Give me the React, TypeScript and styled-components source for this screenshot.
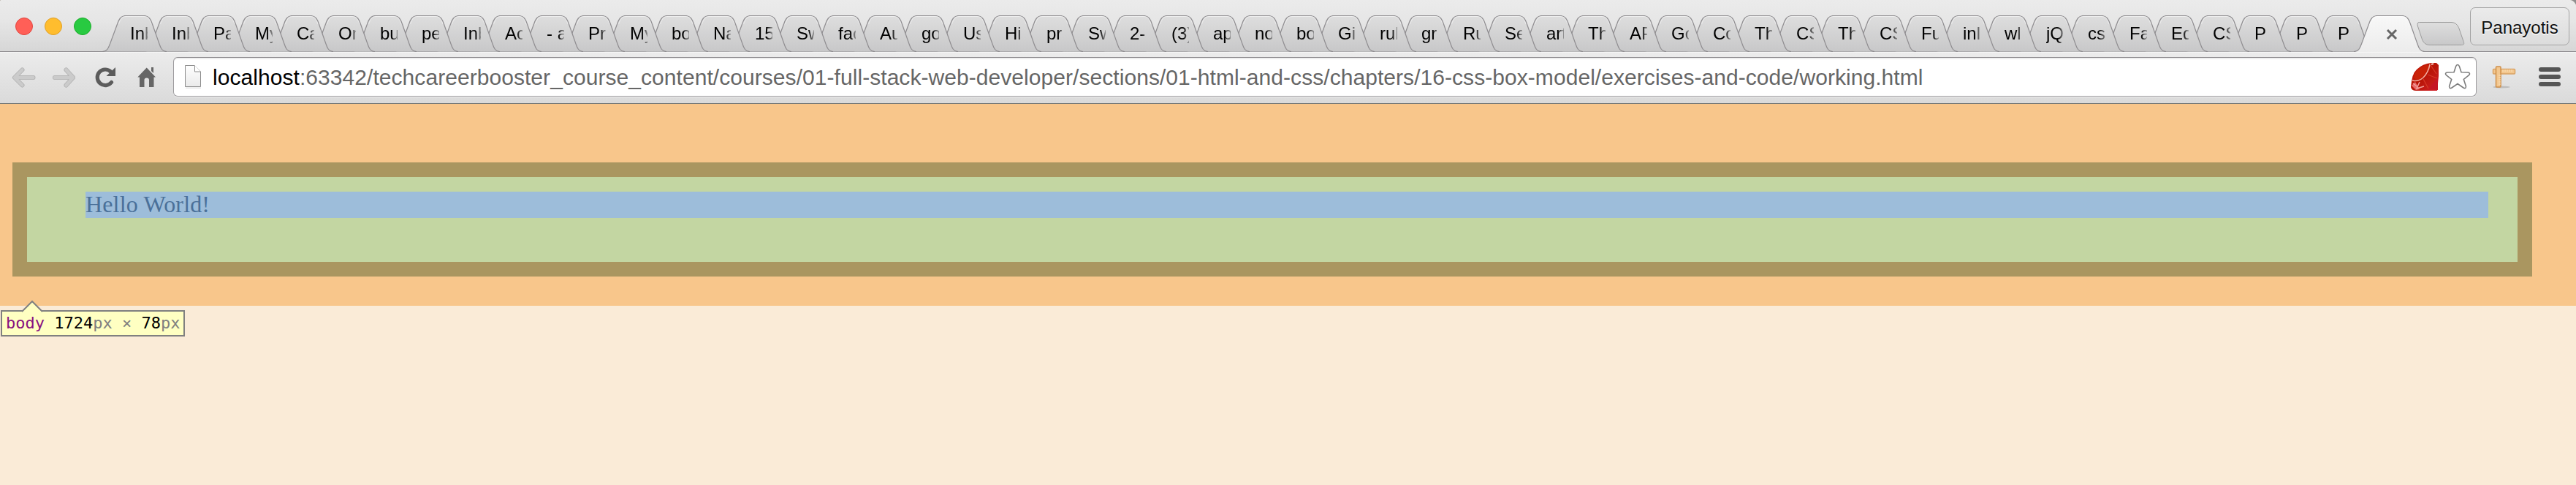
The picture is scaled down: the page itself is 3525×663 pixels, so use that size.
import React from "react";
import styled, { createGlobalStyle } from "styled-components";

const GlobalStyle = createGlobalStyle`
  html { background: #8f8f8f; }
  body { margin: 0; font-family: "Liberation Sans", Arial, sans-serif; }
  * { box-sizing: border-box; }
  svg { display: block; flex: none; }
`;

const Window = styled.div`
  width: 3525px;
  height: 663px;
  display: flex;
  flex-direction: column;
  overflow: hidden;
  border-radius: 2px 9px 0 0;
  background: #faebd7;
`;

const TabStrip = styled.header`
  flex: none;
  height: 71px;
  display: flex;
  background: linear-gradient(#ebebeb, #e6e6e6 40%, #d6d6d6);
  box-shadow: inset 0 -1px #8f8d90;
`;

const TrafficLights = styled.div`
  display: flex;
  gap: 16px;
  padding: 24px 0 0 21px;
  width: 140px;
  flex: none;
`;

const Light = styled.span<{ $fill: string; $edge: string }>`
  width: 24px;
  height: 24px;
  border-radius: 50%;
  background: ${(p) => p.$fill};
  border: 1px solid ${(p) => p.$edge};
`;

const Tabs = styled.div`
  display: flex;
  flex: none;
  padding-top: 21px;
  isolation: isolate;
`;

const TabBox = styled.div<{ $order: number; $active?: boolean }>`
  display: grid;
  flex: none;
  width: ${(p) => (p.$active ? 97 : 88)}px;
  height: 50px;
  margin-right: -31px;
  margin-left: ${(p) => (p.$active ? 3 : 0)}px;
  z-index: ${(p) => p.$order};
  & > * { grid-area: 1 / 1; }
`;

const TabLabel = styled.span`
  margin: 11px 0 0 38px;
  width: 24px;
  height: 32px;
  overflow: hidden;
  white-space: pre;
  font-size: 24px;
  line-height: 27px;
  color: #000;
  mask-image: linear-gradient(90deg, #000 16px, rgba(0, 0, 0, 0.3) 24px);
`;

const CloseIcon = styled.svg`
  margin: 18px 0 0 44px;
`;

const NewTab = styled.svg`
  margin: 29px 0 0 20px;
`;

const ProfileButton = styled.button`
  margin: 10px 9px 0 auto;
  width: 136px;
  height: 52px;
  padding: 3px 0 0;
  border: 1px solid #a3a3a3;
  border-radius: 7px;
  background: linear-gradient(#ebebeb, #dcdcdc);
  font: 24px "Liberation Sans", Arial, sans-serif;
  color: #111;
  text-shadow: 0 2px #f4f4f4;
`;

const Toolbar = styled.nav`
  flex: none;
  height: 71px;
  display: flex;
  align-items: center;
  gap: 21px;
  padding: 0 19px 0 16px;
  background: linear-gradient(#ececec, #dadada);
  border-bottom: 1px solid #777a78;
  box-shadow: inset 0 1px #f6f6f6;
`;

const AddressBar = styled.div`
  width: 3152px;
  height: 54px;
  flex: none;
  display: flex;
  align-items: center;
  margin: 0 0 2px 1px;
  padding: 0 7px 0 15px;
  border: 1px solid #9d9b9e;
  border-top-color: #8d8b8e;
  border-radius: 6px;
  background: #fff;
  box-shadow: 0 1px #f2f2f2, inset 0 2px #efefef;
`;

const Url = styled.span`
  margin-left: 14px;
  flex: 1;
  font-size: 30px;
  line-height: 34px;
  letter-spacing: 0.056px;
  white-space: nowrap;
  color: #666;
  padding-top: 1px;
`;

const Host = styled.span`
  color: #000;
`;

const MenuIcon = styled.svg`
  margin-left: 9px;
`;

const Margin = styled.main`
  position: relative;
  flex: none;
  padding: 80px 60px 40px 17px;
  background: #f8c68b;
`;

const Body = styled.div`
  border: 20px solid #aa9660;
  background: #c3d6a2;
  padding: 20px 40px 60px 80px;
`;

const Content = styled.div`
  height: 36px;
  background: #9dbdda;
  color: #4a7099;
  font: 32px/34px "Liberation Serif", "Times New Roman", serif;
  letter-spacing: 0.15px;
`;

const Tooltip = styled.div`
  position: absolute;
  left: 1px;
  top: 282px;
  width: 252px;
  height: 36px;
  padding-left: 5px;
  border: 2px solid #808080;
  background: #ffffc2;
  font: 22px/32px "DejaVu Sans Mono", monospace;
  white-space: pre;
  color: #808080;
`;

const TooltipArrow = styled.svg`
  position: absolute;
  left: 26px;
  top: -16px;
`;

const TagName = styled.span`
  color: #881280;
`;

const Num = styled.span`
  color: #000;
`;

const titles = [
  "Inb", "Inb", "Pa", "My", "Ca", "On", "bu", "pe", "Inb", "Ac", "- a", "Pr",
  "My", "bo", "Na", "15", "Sw", "fac", "Au", "go", "Us", "Hi", "pr", "Sw",
  "2-", "(3)", "ap", "no", "bo", "Git", "rub", "gr", "Ru", "Se", "art", "Th",
  "AP", "Go", "Co", "Th", "CS", "Th", "CS", "Fu", "inl", "wl", "jQ", "cs",
  "Fa", "Ed", "CS", "P", "P", "P",
];

function TabShape({ extra = 0, active = false }: { extra?: number; active?: boolean }) {
  const r = 57 + extra;
  const d = `M0 49.5C7 49.5 8.500 44 10.500 39L20.500 12C22.500 6 25 .5 32 .5H${r}C${r + 7} .5 ${r + 9.5} 6 ${r + 11.5} 12L${r + 21} 39C${r + 23} 45 ${r + 25} 49.500 ${r + 31} 49.5`;
  const hi = `M22.500 12C24.500 6 27 1.500 32 1.500H${r}C${r + 6} 1.500 ${r + 8} 6 ${r + 10} 12`;
  return (
    <svg width={88 + extra} height="50" viewBox={`0 0 ${88 + extra} 50`}>
      <path d={d + (active ? "V50H0Z" : "Z")} fill={active ? "url(#activeTab)" : "url(#idleTab)"} />
      <path d={d} fill="none" stroke="#8f8d90" strokeWidth="1.2" />
      <path d={hi} fill="none" stroke="#fff" strokeOpacity=".5" />
    </svg>
  );
}

const Gradients = () => (
  <svg width="0" height="0">
    <defs>
      <linearGradient id="idleTab" x2="0" y2="1">
        <stop stopColor="#dedede" />
        <stop offset="1" stopColor="#c8c8c9" />
      </linearGradient>
      <linearGradient id="activeTab" x2="0" y2="1">
        <stop stopColor="#f8f8f8" />
        <stop offset="1" stopColor="#ececec" />
      </linearGradient>
      <linearGradient id="ruby" x2="1" y2="1">
        <stop stopColor="#c81a08" />
        <stop offset=".5" stopColor="#b81507" />
        <stop offset="1" stopColor="#d3202a" />
      </linearGradient>
      <linearGradient id="paper" x2="0" y2="1">
        <stop stopColor="#fff" />
        <stop offset="1" stopColor="#eaeaea" />
      </linearGradient>
    </defs>
  </svg>
);

const Back = () => (
  <svg width="34" height="32" fill="none" strokeLinecap="round" strokeLinejoin="round">
    <path d="M14.500 5.500L4 16L14.500 26.500M5 16H29.500" stroke="#b0b0b0" strokeWidth="6" />
    <path d="M14.500 5.500L4 16L14.500 26.500M5 16H29.500" stroke="#cbcbcb" strokeWidth="4.500" />
  </svg>
);

const Forward = () => (
  <svg width="34" height="32" fill="none" strokeLinecap="round" strokeLinejoin="round">
    <path d="M19.500 5.500L29 16L19.500 26.500M29 16H4" stroke="#b0b0b0" strokeWidth="6" />
    <path d="M19.500 5.500L29 16L19.500 26.500M29 16H4" stroke="#cbcbcb" strokeWidth="4.500" />
  </svg>
);

const Reload = () => (
  <svg width="34" height="32">
    <path d="M26.500 22.500A10.800 10.800 0 1 1 25.500 8" fill="none" stroke="#5c5c5c" strokeWidth="5.200" strokeLinecap="round" />
    <path d="M32 2V14H19.500Z" fill="#5c5c5c" />
  </svg>
);

const Home = () => (
  <svg width="34" height="32" fill="#666">
    <path d="M19.700 2.500L32 15.500H29.500V29H23V19.500Q23 16.500 19.700 16.500T16.500 19.500V29H10V15.500H7.300Z" />
    <path d="M26 2H29V10L26 7Z" />
  </svg>
);

const Page = () => (
  <svg width="24" height="32">
    <path d="M1 31.500H22" stroke="#e4e4e4" strokeWidth="2" />
    <path d="M1 .5H13.500L22 9V29.500H1Z" fill="url(#paper)" stroke="#8c8c8c" transform="translate(-.5 0)" />
    <path d="M13.500 .5V9H21.500" fill="#fff" stroke="#8c8c8c" />
  </svg>
);

const Ruby = () => (
  <svg width="38" height="38">
    <path d="M1 25Q2 15 8 9Q16 1 28 0H35L38 3V18L36 38H7Q1 38 0 33Z" fill="url(#ruby)" />
    <path d="M4 20Q5 12 13 7Q21 1 25 4Q22 15 14 21Q8 25 4 20Z" fill="#c92208" />
    <path d="M2 24Q10 26 17 20Q24 13 26 2" fill="none" stroke="#f3aea0" strokeWidth="1.500" />
    <path d="M23 16L36 21M17 22L24 35M27 3L35 15" stroke="#d63a28" strokeWidth="1.200" />
    <path d="M24 36L37 20L37 37Z" fill="#c51524" />
    <path d="M1 31L6 26L12 36L7 37Z" fill="#e9696a" />
    <path d="M3 28L8 32M12 26L8 35L18 32" stroke="#f0a09a" strokeWidth="1.500" fill="none" />
    <path d="M28 2L31 1" stroke="#f9ccc0" strokeWidth="2" />
  </svg>
);

const Star = () => (
  <svg width="36" height="36" viewBox="0 0 36 36">
    <path
      d="M18 1.500C19.300 1.500 20 2.500 20.500 4L23 11.800L32 12C34.800 12.200 35.300 14.300 33.300 15.800L26.300 21.500L29.300 30.500C30 33.300 28.300 34.500 26 33L18 27.500L10 33C7.700 34.500 6 33.300 6.700 30.500L9.700 21.500L2.700 15.800C.7 14.300 1.200 12.200 4 12L13 11.800L15.500 4C16 2.500 16.700 1.500 18 1.500Z"
      fill="#fff"
      stroke="#7c7c7c"
      strokeWidth="1.600"
    />
  </svg>
);

const Rulers = () => (
  <svg width="34" height="32">
    <ellipse cx="13" cy="29" rx="12" ry="1.500" fill="#bdbdbd" />
    <rect x="1.500" y="4.500" width="30" height="6.500" rx="1" fill="#f3c78f" stroke="#d9a365" strokeWidth="1.500" />
    <rect x="5.500" y="1" width="6.500" height="28" rx="1" fill="#f3c78f" stroke="#cf8f4a" strokeWidth="1.500" />
    <path d="M15 5V8M18 5V8M21 5V8M24 5V8M27 5V8M9 13H12M9 16H12M9 19H12M9 22H12M9 25H12" stroke="#fbe3bd" />
  </svg>
);

export default function App() {
  return (
    <Window>
      <GlobalStyle />
      <TabStrip>
        <TrafficLights>
          <Light $fill="#ff5f57" $edge="#e2463f" />
          <Light $fill="#ffbd2e" $edge="#e0a028" />
          <Light $fill="#28ca41" $edge="#1dad2b" />
        </TrafficLights>
        <Tabs>
          {titles.map((title, i) => (
            <TabBox key={i} $order={titles.length - i}>
              <TabShape />
              <TabLabel>{title}</TabLabel>
            </TabBox>
          ))}
          <TabBox $active $order={100}>
            <TabShape active extra={9} />
            <CloseIcon width="16" height="16">
              <path d="M2 2L14 14M14 2L2 14" stroke="#666" strokeWidth="3" />
            </CloseIcon>
          </TabBox>
        </Tabs>
        <NewTab width="66" height="34">
          <path
            d="M3.500 1.500H47C53 1.500 56 5 58 10L64 27.500C65.500 31 64.500 32.500 61.500 32.500H18C13 32.500 9.500 30 7.500 25L1.500 7C.5 3.500 1 1.500 3.500 1.500Z"
            fill="url(#idleTab)"
            stroke="#9b9b9b"
          />
        </NewTab>
        <ProfileButton>Panayotis</ProfileButton>
      </TabStrip>
      <Toolbar>
        <Back />
        <Forward />
        <Reload />
        <Home />
        <AddressBar>
          <Page />
          <Url>
            <Host>localhost</Host>
            :63342/techcareerbooster_course_content/courses/01-full-stack-web-developer/sections/01-html-and-css/chapters/16-css-box-model/exercises-and-code/working.html
          </Url>
          <Ruby />
          <svg width="8" height="1" />
          <Star />
        </AddressBar>
        <Rulers />
        <MenuIcon width="30" height="32" fill="#555">
          <rect y="2" width="30" height="6" rx="3" />
          <rect y="12" width="30" height="6" rx="3" />
          <rect y="22" width="30" height="6" rx="3" />
        </MenuIcon>
      </Toolbar>
      <Margin>
        <Body>
          <Content>Hello World!</Content>
        </Body>
        <Tooltip>
          <TooltipArrow width="32" height="18">
            <path d="M1 16L15 2L29 16V18H1Z" fill="#ffffc2" />
            <path d="M1 16L15 2L29 16" fill="none" stroke="#808080" strokeWidth="2" />
          </TooltipArrow>
          <TagName>body</TagName> <Num>1724</Num>px × <Num>78</Num>px
        </Tooltip>
      </Margin>
      <Gradients />
    </Window>
  );
}
